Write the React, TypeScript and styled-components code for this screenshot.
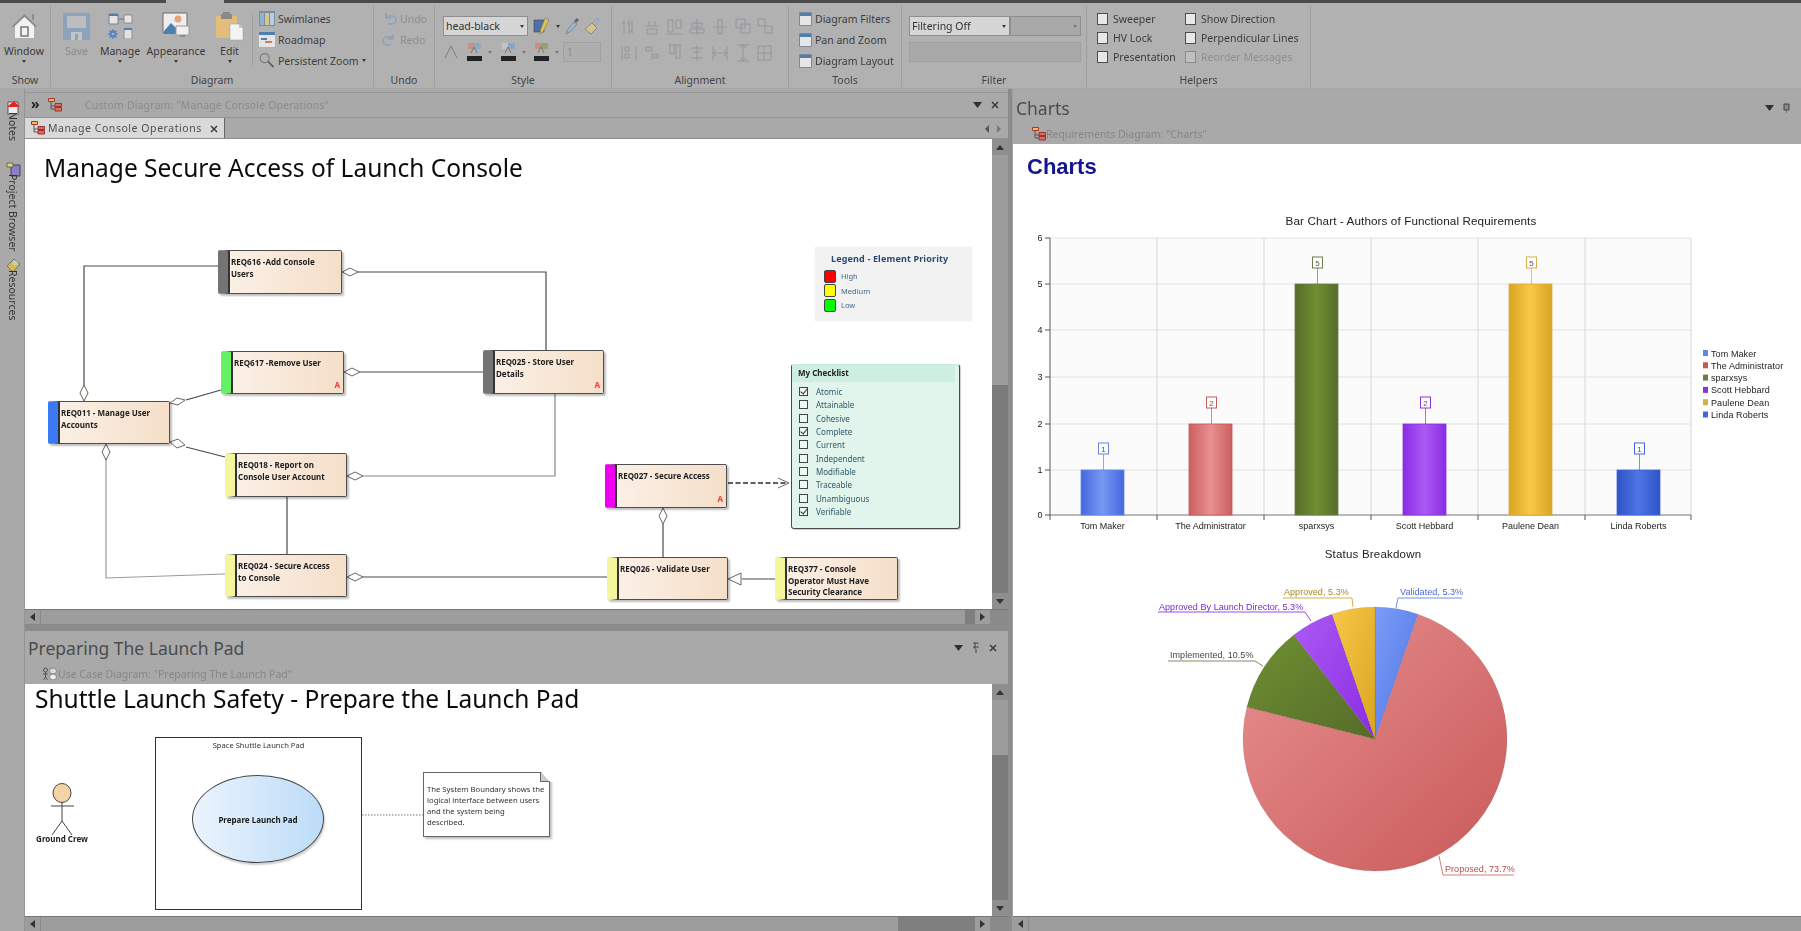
import React from "react";
import styled, { createGlobalStyle } from "styled-components";

const Global = createGlobalStyle`
  html, body { margin: 0; padding: 0; width: 1801px; height: 931px; overflow: hidden; background: #a9a9a9; }
  #root { width: 1801px; height: 931px; }
  * { box-sizing: border-box; }
`;

const UI = `"Noto Sans", "DejaVu Sans", sans-serif`;
const CHART = `"Liberation Sans", Arial, sans-serif`;

const Page = styled.div`
  width: 1801px; height: 931px; display: flex; flex-direction: column;
  font-family: ${UI}; color: #3c3c3c; filter: blur(0.6px); overflow: hidden;
`;
const TopStrip = styled.div`height: 3px; display: flex; flex: none;`;
const TopDark = styled.div<{ $w?: number }>`
  background: #4a4a4a; ${p => (p.$w ? `width:${p.$w}px;` : "flex:1;")}
`;
const TopGap = styled.div`width: 58px; background: #b1b1b1;`;

const Ribbon = styled.div`height: 86px; flex: none; display: flex; background: #b1b1b1; border-bottom: 1px solid #a6a6a6;`;
const Group = styled.div<{ $w: number }>`
  width: ${p => p.$w}px; flex: none; display: flex; flex-direction: column;
  margin: 3px 0 1px; border-right: 1px solid #9e9e9e;
`;
const GroupBody = styled.div<{ $pad?: string; $gap?: number }>`
  flex: 1; min-height: 0; display: flex; padding: ${p => p.$pad ?? "0"}; gap: ${p => p.$gap ?? 0}px;
`;
const GroupLabel = styled.div`
  height: 17px; padding-top: 3px; flex: none; text-align: center; font-size: 10.5px; line-height: 14px; color: #444;
`;
const LargeBtn = styled.div<{ $w: number; $off?: boolean }>`
  width: ${p => p.$w}px; flex: none; display: flex; flex-direction: column; align-items: center;
  padding-top: 5px; font-size: 10.5px; line-height: 14px; color: ${p => (p.$off ? "#8d8d8d" : "#3a3a3a")};
`;
const IconSlot = styled.div`height: 30px; flex: none; display: flex; align-items: center; justify-content: center;`;
const BtnLabel = styled.span`margin-top: 3px; white-space: nowrap;`;
const Caret = styled.span<{ $light?: boolean }>`
  width: 0; height: 0; flex: none; border-left: 2.5px solid transparent; border-right: 2.5px solid transparent;
  border-top: 3px solid ${p => (p.$light ? "#777" : "#3a3a3a")};
`;
const BtnCaret = styled(Caret)`margin-top: 2px;`;
const VDivider = styled.div`width: 1px; height: 53px; margin: 7px 6px 0 0; background: #a0a0a0; flex: none;`;
const SmallCol = styled.div<{ $pad?: string }>`
  display: flex; flex-direction: column; flex: none; padding: ${p => p.$pad ?? "2px 0 0"};
`;
const SmallRow = styled.div<{ $off?: boolean }>`
  height: 21px; flex: none; display: flex; align-items: center; gap: 3px; font-size: 10.5px; white-space: nowrap;
  color: ${p => (p.$off ? "#8f8f8f" : "#3d3d3d")};
`;
const Combo = styled.div<{ $w: number; $off?: boolean }>`
  width: ${p => p.$w}px; height: 20px; flex: none; display: flex; align-items: center; justify-content: space-between;
  padding: 0 3px 0 2px; font-size: 10.5px; color: #333;
  background: ${p => (p.$off ? "#a9a9a9" : "#d6d6d6")}; border: 1px solid #8e8e8e;
`;
const IconRow = styled.div<{ $gap?: number }>`
  display: flex; align-items: center; height: 26px; flex: none; gap: ${p => p.$gap ?? 0}px;
`;
const ColorCell = styled.div<{ $w: number }>`
  width: ${p => p.$w}px; flex: none; display: flex; align-items: center; gap: 5px; padding-left: 1px;
`;
const Spinner = styled.div`
  width: 38px; height: 20px; flex: none; border: 1px solid #a0a0a0; background: #aeaeae;
  font-size: 10px; color: #8c8c8c; padding-left: 3px; line-height: 18px;
`;
const AlignGrid = styled.div`
  display: grid; grid-template-columns: repeat(7, 22.7px); grid-template-rows: 26px 26px; padding: 8px 0 0 6px;
  place-items: center;
`;
const FilterStack = styled.div`display: flex; flex-direction: column; gap: 6px; padding: 10px 0 0 7px;`;
const FilterTop = styled.div`display: flex;`;
const FilterInput = styled.div`width: 172px; height: 20px; background: #a9a9a9; border: 1px solid #a0a0a0;`;
const HelperGrid = styled.div`
  display: grid; grid-template-columns: 88px 130px; grid-auto-rows: 19px; padding: 3px 0 0 10px;
`;
const Check = styled.label<{ $off?: boolean }>`
  display: flex; align-items: center; gap: 5px; font-size: 10.5px; white-space: nowrap;
  color: ${p => (p.$off ? "#8f8f8f" : "#3c3c3c")};
`;
const CheckBox = styled.span<{ $off?: boolean }>`
  width: 11px; height: 12px; flex: none; background: ${p => (p.$off ? "#c0c0c0" : "#e8e8e8")};
  border: 1px solid ${p => (p.$off ? "#8a8a8a" : "#4d4d4d")};
`;

const Body = styled.div`flex: 1; min-height: 0; display: flex;`;
const Rail = styled.div`width: 25px; flex: none; display: flex; flex-direction: column; align-items: center; padding: 11px 0 0 2px; background: #a9a9a9; border-right: 1px solid #949494;`;
const RailItem = styled.div<{ $h: number }>`
  height: ${p => p.$h}px; flex: none; display: flex; flex-direction: column; align-items: center;
`;
const RailText = styled.span`
  writing-mode: vertical-rl; font-size: 10.5px; line-height: 12px; color: #333; white-space: nowrap; margin-top: -3px;
`;
const LeftColumn = styled.div`width: 983px; flex: none; display: flex; flex-direction: column;`;
const Splitter = styled.div`width: 5px; flex: none; background: #8b8b8b; border-right: 1px solid #a0a0a0;`;
const RightColumn = styled.div`flex: 1; min-width: 0; display: flex; flex-direction: column;`;

const CaptionRow = styled.div`
  height: 26px; margin-top: 3px; flex: none; display: flex; align-items: center; background: #a9a9a9;
  border-top: 1px solid #959595; border-bottom: 1px solid #959595; padding: 0 9px 0 6px; font-size: 10.5px; color: #8b8b8b;
`;
const Chevrons = styled.span`font-size: 14px; line-height: 14px; color: #222; font-weight: 700; width: 17px; margin-top: -2px;`;
const CaptionText = styled.span`margin-left: 23px; letter-spacing: .15px;`;
const Grow = styled.div`flex: 1;`;
const PanelIcons = styled.div`display: flex; align-items: center; gap: 9px; color: #333;`;
const TabRow = styled.div`
  height: 21px; flex: none; display: flex; background: #a9a9a9; align-items: flex-end; border-bottom: 1px solid #8f8f8f; padding-right: 7px;
`;
const Tab = styled.div`
  width: 200px; height: 20px; background: #d9d9d9; display: flex; align-items: center; gap: 3px; padding: 0 6px;
  font-size: 10.5px; color: #505050; letter-spacing: .55px; border-right: 1px solid #666; white-space: nowrap;
`;
const TabClose = styled.span`margin-left: auto; font-size: 11px; color: #222; letter-spacing: 0;`;
const TabNav = styled.div`margin: 0 0 5px auto; display: flex; gap: 8px;`;
const NavArrow = styled.span<{ $dir: "l" | "r" }>`
  width: 0; height: 0; border-top: 4px solid transparent; border-bottom: 4px solid transparent;
  ${p => (p.$dir === "l" ? "border-right: 4px solid #555;" : "border-left: 4px solid #777;")}
`;
const Row = styled.div<{ $h: number }>`height: ${p => p.$h}px; flex: none; display: flex;`;
const Canvas = styled.div`flex: 1; min-width: 0; position: relative; background: #fff;`;
const DiagramSvg = styled.svg`position: absolute; inset: 0; width: 100%; height: 100%;`;
const VScroll = styled.div`width: 16px; flex: none; display: flex; flex-direction: column; background: #7b7b7b; align-items: stretch;`;
const VBtn = styled.div`height: 16px; flex: none; display: flex; align-items: center; justify-content: center; background: #8f8f8f;`;
const VThumb = styled.div<{ $h: number }>`height: ${p => p.$h}px; flex: none; background: #9c9c9c;`;
const VTrack = styled.div`flex: 1;`;
const VArrow = styled.span<{ $up?: boolean }>`
  width: 0; height: 0; border-left: 4px solid transparent; border-right: 4px solid transparent;
  ${p => (p.$up ? "border-bottom: 5px solid #333;" : "border-top: 5px solid #333;")}
`;
const HScroll = styled.div`height: 15px; flex: none; display: flex; align-items: stretch; background: #9d9d9d; border-top: 1px solid #777;`;
const HBtn = styled.div`width: 15px; flex: none; display: flex; align-items: center; justify-content: center;`;
const HThumb = styled.div`flex: 1; background: #9d9d9d; border-left: 1px solid #8a8a8a;`;
const HTrack = styled.div<{ $w: number }>`width: ${p => p.$w}px; flex: none; background: #7f7f7f;`;
const HCorner = styled.div<{ $w: number }>`width: ${p => p.$w}px; flex: none; background: #8a8a8a;`;
const HArrow = styled.span<{ $dir: "l" | "r" }>`
  width: 0; height: 0; border-top: 4px solid transparent; border-bottom: 4px solid transparent;
  ${p => (p.$dir === "l" ? "border-right: 5px solid #333;" : "border-left: 5px solid #333;")}
`;
const SplitBar = styled.div`height: 7px; flex: none; background: #8b8b8b;`;
const PanelHead = styled.div<{ $h: number; $top?: number }>`
  height: ${p => p.$h}px; flex: none; background: #a9a9a9; display: flex; flex-direction: column; padding-top: ${p => p.$top ?? 0}px;
`;
const PanelTitleRow = styled.div`height: 33px; flex: none; display: flex; align-items: center; padding: 0 11px 0 3px;`;
const PanelTitle = styled.span`font-size: 17.5px; color: #4c4c4c;`;
const PanelSub = styled.div<{ $left: number }>`
  display: flex; align-items: center; font-size: 10.5px; color: #868686; padding-left: ${p => p.$left}px; height: 16px; margin-top: 2px; flex: none;
`;
const DiagramTitle = styled.div<{ $x: number; $y: number }>`
  position: absolute; left: ${p => p.$x}px; top: ${p => p.$y}px; font-size: 24.5px; line-height: 1.2; color: #0c0c0c; white-space: nowrap;
`;
const ReqBox = styled.div<{ $x: number; $y: number; $w: number; $h: number; $bar: string }>`
  position: absolute; left: ${p => p.$x - 25}px; top: ${p => p.$y - 139}px; width: ${p => p.$w}px; height: ${p => p.$h}px;
  border: 1px solid #4e4e4e; border-radius: 2px; background: linear-gradient(90deg, #fbf0e6, #f5dfc9);
  box-shadow: 2px 2px 2px rgba(0,0,0,.25); border-left: 10px solid ${p => p.$bar};
  padding: 5px 2px 0 3px; font-size: 8px; line-height: 11.5px; font-weight: 700; color: #1c1c1c;
  &::before { content: ""; position: absolute; left: 0; top: 0; bottom: 0; width: 1.5px; background: #333; }
`;
const ReqMark = styled.span`position: absolute; right: 3px; bottom: 3px; color: #f33; font-size: 8px; line-height: 10px; font-weight: 700;`;
const Legend = styled.div`
  position: absolute; left: ${815 - 25}px; top: ${247 - 139}px; width: 157px; height: 74px; background: #f2f2f2;
  border-radius: 2px; padding: 6px 0 0 9px; box-shadow: 0 0 1px rgba(0,0,0,.2);
`;
const LegendTitle = styled.div`font-size: 9px; line-height: 12px; font-weight: 700; color: #2b4a73; padding-left: 7px; margin-bottom: 4px; letter-spacing: .15px;`;
const LegendRow = styled.div`height: 14.5px; display: flex; align-items: center; gap: 5px; font-size: 7.5px; color: #45658f;`;
const LegendSwatch = styled.span<{ $c: string }>`width: 12px; height: 13px; background: ${p => p.$c}; border: 1px solid #444; border-radius: 2px;`;
const Checklist = styled.div`
  position: absolute; left: ${791 - 25}px; top: ${364 - 139}px; width: 169px; height: 165px;
  background: #e1f5ed; border: 1px solid #4a4a4a; border-top-color: #c9ebde; border-radius: 3px; box-shadow: 1px 1px 1px rgba(0,0,0,.2);
`;
const ChecklistHead = styled.div`height: 17px; margin: 0 4px 0 0; background: #cdeee1; font-size: 8px; font-weight: 700; line-height: 15px; padding-left: 6px; color: #222;`;
const ChecklistBody = styled.div`padding: 3px 0 0 7px;`;
const ChecklistRow = styled.div`height: 13.3px; display: flex; align-items: center; gap: 8px; font-size: 8px; color: #2f5866;`;
const ChecklistBox = styled.span<{ $on?: boolean }>`
  width: 9px; height: 9px; flex: none; border: 1px solid #444; background: #eef8f4; position: relative;
  ${p => p.$on ? `&::after { content: ""; position: absolute; left: 2px; top: -1px; width: 3px; height: 6px; border: solid #333; border-width: 0 1.5px 1.5px 0; transform: rotate(40deg); }` : ""}
`;
const Note = styled.div`
  position: absolute; left: ${423 - 25}px; top: ${772 - 684}px; width: 127px; height: 65px; background: #fff;
  border: 1px solid #666; box-shadow: 2px 2px 2px rgba(0,0,0,.25); padding: 11px 2px 0 3px; font-size: 7.7px; line-height: 11px; color: #343434;
  white-space: nowrap; clip-path: polygon(0 0, 118px 0, 127px 10px, 135px 10px, 135px 75px, 0 75px);
`;
const NoteLine = styled.div``;
const NoteFold = styled.span`position: absolute; right: -1px; top: -1px; width: 10px; height: 10px; background: linear-gradient(45deg, #ccc 50%, #fff 50%); border-left: 1px solid #666; border-bottom: 1px solid #666;`;
const Boundary = styled.div`
  position: absolute; left: ${155 - 25}px; top: ${737 - 684}px; width: 207px; height: 173px; border: 1px solid #333;
  font-size: 7.6px; text-align: center; padding-top: 2px; line-height: 11px; color: #333;
`;
const UseCase = styled.div`
  position: absolute; left: ${192 - 25}px; top: ${775 - 684}px; width: 132px; height: 88px; border-radius: 50%;
  border: 1px solid #444; background: linear-gradient(90deg, #ebf4fd, #bddcf8); box-shadow: 1px 2px 2px rgba(0,0,0,.2);
  display: flex; align-items: center; justify-content: center; font-size: 8px; font-weight: 700; color: #1a1a1a;
`;
const ActorLabel = styled.div`position: absolute; left: ${36 - 25}px; top: ${833 - 684}px; width: 52px; text-align: center; font-size: 8px; font-weight: 700; color: #222; white-space: nowrap; line-height: 11px;`;
const ChartHeading = styled.div`
  position: absolute; left: 14px; top: 9px; font-family: ${CHART}; font-size: 22px; line-height: 28px; font-weight: 700; color: #15158f;
`;

const Home = () => (
  <svg width="29" height="28" viewBox="0 0 29 28">
    <path d="M24 2h-2v5l2 2z" fill="#8c8c8c" />
    <path d="M14.5 2 2 14l1.5 1.5L14.5 5l11 10.500L27 14z" fill="#8e8e8e" />
    <path d="M5 14 14.500 5 24 14v12H5z" fill="#f2f2f2" />
    <path d="M11 15h7v9h-7z" fill="none" stroke="#777" strokeWidth="1.500" />
  </svg>
);
const Floppy = () => (
  <svg width="27" height="27" viewBox="0 0 27 27">
    <path d="M0 0h27v27H0z" fill="#8ba3bb" />
    <path d="M4 3h19v12H4z" fill="#bdbdbd" />
    <path d="M8 19h11v8H8z" fill="#c4c4c4" /><path d="M12 21h3v6h-3z" fill="#8ba3bb" />
  </svg>
);
const ManageIcon = () => (
  <svg width="26" height="26" viewBox="0 0 26 26">
    <path d="M2 1h9v10H2z" fill="#e6e6e6" stroke="#6d8299" /><path d="M2 1h9v2H2z" fill="#587ea6" />
    <path d="M17 2h8v8h-8z" fill="#e6e6e6" stroke="#8d8d8d" /><path d="M11 6h6" stroke="#777" />
    <path d="M17 16h8v10h-8z" fill="#e2e2e2" stroke="#8d8d8d" /><path d="M17 15h8v2h-8z" fill="#587ea6" />
    <circle cx="6" cy="21" r="3.500" fill="#4f86c4" /><circle cx="6" cy="21" r="1.300" fill="#b1b1b1" />
    <path d="M6 16v2M6 24v2M1 21h2M9 21h2M2.500 17.500l1.500 1.500M8 23l1.500 1.500M2.500 24.500 4 23M8 19l1.500-1.500" stroke="#4f86c4" strokeWidth="1.200" />
  </svg>
);
const AppearanceIcon = () => (
  <svg width="28" height="28" viewBox="0 0 28 28">
    <path d="M1 1h24v20H1z" fill="#eee" stroke="#6c6c6c" />
    <path d="M2 19 9 11l7 7v4H2z" fill="#4f7faf" />
    <circle cx="16" cy="7" r="3.500" fill="#e8a27a" />
    <path d="M14 14h13v9H14z" fill="#f0f0f0" stroke="#999" />
    <path d="M18 23h5v2h-5z" fill="#8c8c8c" />
  </svg>
);
const ClipIcon = () => (
  <svg width="28" height="30" viewBox="0 0 28 30">
    <path d="M0 5h21v22H0z" fill="#e3bd7c" />
    <path d="M7 3h7V1h-7zM5 3h11v5H5z" fill="#8a8a8a" />
    <path d="M14 13h9l4 4v12H14z" fill="#f4f4f4" stroke="#9a9a9a" strokeWidth=".5" />
    <path d="M23 13v4h4z" fill="#c5c5c5" />
  </svg>
);
const Swim = () => (
  <svg width="16" height="15" viewBox="0 0 16 15">
    <path d="M0 0h16v15H0z" fill="#7a8ea2" /><path d="M1 2h4v12H1z" fill="#93b2cf" /><path d="M6 2h4v12H6z" fill="#d8c58f" /><path d="M11 2h4v12h-4z" fill="#b5cfe4" />
  </svg>
);
const Road = () => (
  <svg width="16" height="15" viewBox="0 0 16 15">
    <path d="M0 0h16v15H0z" fill="#e4e4e4" /><path d="M0 0h16v3H0z" fill="#4f7faf" />
    <path d="M2 6h6v2H2z" fill="#4f7faf" /><path d="M6 9h7v2H6z" fill="#cf7b64" />
  </svg>
);
const Zoom = () => (
  <svg width="16" height="17" viewBox="0 0 17 17" fill="none">
    <circle cx="6" cy="6" r="4.800" stroke="#7b7b7b" strokeWidth="1.200" /><path d="m9.500 9.500 6 6" stroke="#636363" strokeWidth="2" />
  </svg>
);
const PanelGlyph = () => (
  <svg width="13" height="14" viewBox="0 0 13 14">
    <path d="M.5.500h12v13H.5z" fill="#e6e6e6" stroke="#7c8a98" /><path d="M1 1h11v3H1z" fill="#4f7faf" />
  </svg>
);
const DiagramGlyph = () => (
  <svg width="14" height="14" viewBox="0 0 14 14">
    <path d="M3 4v7h4M3 8h4" stroke="#555" fill="none" />
    <path d="M.5.500h6v3h-6z" fill="#e6c64f" stroke="#a33" />
    <path d="M7 5.500h6.500v3H7zM7 9.500h6.500v3.500H7z" fill="#e06a5c" stroke="#933" />
  </svg>
);
const Triangle = () => <svg width="9" height="6" viewBox="0 0 9 6"><path d="M0 0h9L4.500 6z" fill="#2f2f2f" /></svg>;
const CloseX = () => <svg width="8" height="8" viewBox="0 0 8 8"><path d="m1 1 6 6M7 1 1 7" stroke="#333" strokeWidth="1.400" /></svg>;
const PinV = () => <svg width="8" height="11" viewBox="0 0 8 11"><path d="M1 1h5v1M3 1v6M1 5h6M4 7v4" stroke="#444" fill="none" /></svg>;
const PinH = () => <svg width="7" height="10" viewBox="0 0 7 10"><path d="M1 1h5v6H1z" fill="#8a8a8a" stroke="#444" /><path d="M3.500 7v3" stroke="#777" /></svg>;
const Mono = ({ d }: { d: string }) => (
  <svg width="16" height="18" viewBox="0 0 16 18" fill="none"><path d={d} stroke="#8f949a" strokeWidth=".9" /></svg>
);
const Brush = () => (
  <svg width="18" height="18" viewBox="0 0 18 18">
    <path d="M1 3h10v12H1z" fill="#4f6fa6" stroke="#444" strokeWidth=".6" /><path d="M12 1l4 2-6 12-3 2 .5-4z" fill="#e3c14c" stroke="#777" strokeWidth=".6" />
  </svg>
);
const Dropper = () => (
  <svg width="14" height="18" viewBox="0 0 14 18"><path d="m1 17 2-5 6-7 3 2-6 7z" fill="#9db6cf" stroke="#6c8094" strokeWidth=".8" /><path d="m9 4 3-3 2 2-3 3z" fill="#666" /></svg>
);
const Bucket = () => (
  <svg width="16" height="18" viewBox="0 0 16 18"><path d="m1 12 7-6 5 5-6 6z" fill="#d6c489" stroke="#8a8a8a" /><path d="m8 6 5-5 2 2-4 5z" fill="#9db6cf" stroke="#8a8a8a" strokeWidth=".5" /></svg>
);
const ColorA = ({ a, b }: { a: string; b: string }) => (
  <svg width="17" height="19" viewBox="0 0 17 19">
    <path d="M2 0h6v6H2z" fill={a} opacity=".8" /><path d="M8 0h7v6H8z" fill={b} opacity=".8" />
    <path d="M5 10 8 4l3 6" stroke="#777" fill="none" /><path d="M1 13h15v5H1z" fill="#222" />
  </svg>
);

const rows: string[] = [
  "M3 2v14M8 2v14M11 2v14M1 5h3M6 5h3M9 13h3",
  "M1 8h14M5 3v5M11 3v5M3 11h10v5H3z",
  "M1 2h5v12H1zM9 2h5v8H9zM0 16h16",
  "M8 1v16M3 5h10v4H3zM1 11h14v4H1z",
  "M1 9h14M6 2h4v14H6z",
  "M1 1h9v9H1zM6 6h9v9H6z",
  "M1 1h7v7H1zM8 8h7v7H8z",
];
const rows2: string[] = [
  "M1 2v14M15 2v14M4 3h4v4H4zM4 10h4v4H4z",
  "M8 2v14M2 3h4v4H2zM10 10h4v4h-4z",
  "M1 1h14M3 1v9h4V1M9 1v13h4V1",
  "M8 1v16M2 4h12M2 14h12M4 8h8",
  "M1 2v14M15 2v14M1 9h14M4 6l-3 3 3 3M12 6l3 3-3 3",
  "M2 1h12M2 17h12M8 1v16M5 4l3-3 3 3M5 14l3 3 3-3",
  "M1 2h13v14H1zM7 2v14M1 9h13",
];

const reqs = [
  { x: 218, y: 250, w: 124, h: 44, bar: "#747474", t: ["REQ616 -Add Console", "Users"] },
  { x: 221, y: 351, w: 123, h: 43, bar: "#66f066", t: ["REQ617 -Remove User"], m: true },
  { x: 483, y: 350, w: 121, h: 44, bar: "#747474", t: ["REQ025 - Store User", "Details"], m: true },
  { x: 48, y: 401, w: 122, h: 43, bar: "#3c7af5", t: ["REQ011 - Manage User", "Accounts"] },
  { x: 225, y: 453, w: 122, h: 44, bar: "#f5f59c", t: ["REQ018 - Report on", "Console User Account"] },
  { x: 225, y: 554, w: 122, h: 43, bar: "#f5f59c", t: ["REQ024 - Secure Access", "to Console"] },
  { x: 605, y: 464, w: 122, h: 44, bar: "#f000f0", t: ["REQ027 - Secure Access"], m: true },
  { x: 607, y: 557, w: 121, h: 43, bar: "#f5f59c", t: ["REQ026 - Validate User"] },
  { x: 775, y: 557, w: 123, h: 43, bar: "#f5f59c", t: ["REQ377 - Console", "Operator Must Have", "Security Clearance"] },
];
const checklist: [string, boolean][] = [
  ["Atomic", true], ["Attainable", false], ["Cohesive", false], ["Complete", true], ["Current", false],
  ["Independent", false], ["Modifiable", false], ["Traceable", false], ["Unambiguous", false], ["Verifiable", true],
];

const diamondH = (x: number, y: number) => `M${x} ${y}l8 -4 8 4 -8 4z`;
const diamondV = (x: number, y: number) => `M${x} ${y}l-4 8 4 8 4 -8z`;

const Connectors = () => (
  <DiagramSvg viewBox="25 139 967 470">
    <g fill="none" stroke="#4a4a4a" strokeWidth="1.200">
      <path d="M218 266H84V385" />
      <path d="M357 272H546V350" />
      <path d="M360 372H483" />
      <path d="M221 390 186 400" />
      <path d="M225 457 186 447" />
      <path d="M106 459V578L225 574" stroke="#9a9a9a" />
      <path d="M363 476H555V394" stroke="#888" />
      <path d="M287 497V554" />
      <path d="M363 577H607" />
      <path d="M663 524V557" />
      <path d="M742 579H775" />
      <path d="M728 483H788" stroke="#2a2a2a" strokeWidth="1.400" strokeDasharray="5 2.500" />
      <path d="M778 478 789 483 778 488" strokeWidth=".8" />
    </g>
    <g fill="#fffdf5" stroke="#555" strokeWidth=".9">
      <path d={diamondH(342, 272)} /><path d={diamondH(344, 372)} /><path d={diamondH(347, 476)} /><path d={diamondH(347, 577)} />
      <path d="m170 403 7-5 8 2-7 5z" /><path d="m170 442 8-3 7 6-8 3z" />
      <path d={diamondV(84, 385)} /><path d={diamondV(106, 444)} /><path d={diamondV(663, 508)} />
      <path d="M728 579 741 573V585z" />
    </g>
  </DiagramSvg>
);

const Actor = () => (
  <DiagramSvg viewBox="25 684 967 232">
    <ellipse cx="62" cy="793" rx="9" ry="9.500" fill="#f4d3a5" stroke="#444" />
    <path d="M62 802V821M51 806H74M62 821 52 835M62 821 72 835" stroke="#444" fill="none" />
    <path d="M362 815H423" stroke="#777" strokeDasharray="1.500 1.500" />
  </DiagramSvg>
);

type Bar = { n: string; x: number; v: number; dark: string; light: string; box: string };
const bars: Bar[] = [
  { n: "Tom Maker", x: 1081, v: 1, dark: "#4468dc", light: "#7898f5", box: "#5f86ee" },
  { n: "The Administrator", x: 1189, v: 2, dark: "#cc5f5f", light: "#e89090", box: "#c85858" },
  { n: "sparxsys", x: 1295, v: 5, dark: "#566b2b", light: "#6f9030", box: "#6b7f45" },
  { n: "Scott Hebbard", x: 1403, v: 2, dark: "#8a2be2", light: "#ab5af5", box: "#8a34d8" },
  { n: "Paulene Dean", x: 1509, v: 5, dark: "#daa520", light: "#f8c848", box: "#d7ae4c" },
  { n: "Linda Roberts", x: 1617, v: 1, dark: "#2f54c6", light: "#4d75e6", box: "#4068dc" },
];
const gridY = [515, 470, 424, 377, 330, 284, 238];
const gridX = [1050, 1157, 1264, 1371, 1478, 1585, 1691];

const polar = (deg: number, r: number) => {
  const a = ((deg - 90) * Math.PI) / 180;
  return [1375 + r * Math.cos(a), 739 + r * Math.sin(a)];
};
const slicePath = (a: number, b: number) => {
  const [x1, y1] = polar(a, 132);
  const [x2, y2] = polar(b, 132);
  return `M1375 739L${x1} ${y1}A132 132 0 ${b - a > 180 ? 1 : 0} 1 ${x2} ${y2}Z`;
};

const Charts = () => (
  <DiagramSvg viewBox="1013 144 788 772">
    <defs>
      {bars.map((b, i) => (
        <linearGradient id={`bar${i}`} key={b.n}>
          <stop offset="0" stopColor={b.dark} /><stop offset=".5" stopColor={b.light} /><stop offset="1" stopColor={b.dark} />
        </linearGradient>
      ))}
      <linearGradient id="pR" x1="0" y1="0" x2="1" y2="1"><stop offset="0" stopColor="#e89090" /><stop offset="1" stopColor="#c95a5a" /></linearGradient>
      <linearGradient id="pG" x1="0" y1="0" x2="1" y2="1"><stop offset="0" stopColor="#6f9030" /><stop offset="1" stopColor="#566b2b" /></linearGradient>
      <linearGradient id="pP" x1="0" y1="0" x2="1" y2="1"><stop offset="0" stopColor="#ab5af5" /><stop offset="1" stopColor="#8a2be2" /></linearGradient>
      <linearGradient id="pY" x1="0" y1="0" x2="1" y2="1"><stop offset="0" stopColor="#f8c848" /><stop offset="1" stopColor="#daa520" /></linearGradient>
      <linearGradient id="pB" x1="0" y1="0" x2="1" y2="1"><stop offset="0" stopColor="#7c9cf5" /><stop offset="1" stopColor="#4e74e8" /></linearGradient>
    </defs>
    <g fontFamily={CHART} fill="#222">
      <text x="1411" y="225" fontSize="11.700" textAnchor="middle" letterSpacing=".1">Bar Chart - Authors of Functional Requirements</text>
      <rect x="1050" y="238" width="641" height="277" fill="#fbfbfb" />
      {gridY.slice(1).map(y => <path key={y} d={`M1050 ${y}H1691`} stroke="#e2e2e2" strokeWidth="1" />)}
      {gridX.slice(1).map(x => <path key={x} d={`M${x} 238V515`} stroke="#dedede" strokeWidth="1.200" />)}
      <path d="M1050 238V515H1691" fill="none" stroke="#777" strokeWidth="1.200" />
      {gridY.map((y, i) => (
        <g key={y}>
          <path d={`M1045 ${y}H1050`} stroke="#555" />
          <text x="1040" y={y + 3} fontSize="9" textAnchor="middle">{i}</text>
        </g>
      ))}
      {gridX.map(x => <path key={x} d={`M${x} 515V520`} stroke="#555" />)}
      {bars.map((b, i) => {
        const top = gridY[b.v];
        const cx = b.x + 21.5;
        return (
          <g key={b.n}>
            <rect x={b.x} y={top} width="43" height={515 - top} fill={`url(#bar${i})`} stroke={b.box} strokeWidth=".8" />
            <path d={`M${cx + 1} ${top}V${top - 16}`} stroke={b.box} opacity=".7" />
            <rect x={cx - 4} y={top - 27} width="10" height="11" fill="#fff" stroke={b.box} strokeWidth="1" />
            <text x={cx + 1} y={top - 18} fontSize="8" textAnchor="middle" fill="#555">{b.v}</text>
            <text x={cx} y="529" fontSize="9" textAnchor="middle">{b.n}</text>
            <rect x="1703" y={350 + i * 12.300} width="5" height="6" fill={b.box} />
            <text x="1711" y={356.500 + i * 12.300} fontSize="9" letterSpacing=".1">{b.n}</text>
          </g>
        );
      })}
      <text x="1373" y="558" fontSize="11.500" textAnchor="middle" letterSpacing=".2">Status Breakdown</text>
      <g stroke="#00000022" strokeWidth=".6">
        <path d={slicePath(0, 19)} fill="url(#pB)" />
        <path d={slicePath(19, 284)} fill="url(#pR)" />
        <path d={slicePath(284, 322)} fill="url(#pG)" />
        <path d={slicePath(322, 341)} fill="url(#pP)" />
        <path d={slicePath(341, 360)} fill="url(#pY)" />
      </g>
      <g fontSize="9" letterSpacing=".05">
        <path d="M1462 598H1398L1396 608" fill="none" stroke="#6e8ff0" />
        <text x="1400" y="595" fill="#4868d8">Validated, 5.3%</text>
        <path d="M1283 598H1352L1353 607" fill="none" stroke="#d7ae4c" />
        <text x="1284" y="595" fill="#a98824">Approved, 5.3%</text>
        <path d="M1158 612H1305L1311 621" fill="none" stroke="#9a4fe8" />
        <text x="1159" y="610" fill="#7a2cc8">Approved By Launch Director, 5.3%</text>
        <path d="M1168 661H1255L1263 666" fill="none" stroke="#7f8f60" />
        <text x="1170" y="658" fill="#445">Implemented, 10.5%</text>
        <path d="M1439 856 1443 875H1514" fill="none" stroke="#d77a7a" />
        <text x="1445" y="872" fill="#b84c4c">Proposed, 73.7%</text>
      </g>
    </g>
  </DiagramSvg>
);

export default function App() {
  return (
    <Page>
      <Global />
      <TopStrip><TopDark $w={166} /><TopGap /><TopDark /></TopStrip>
      <Ribbon>
        <Group $w={51}>
          <GroupBody $pad="0 0 0 4px"><LargeBtn $w={40}><IconSlot><Home /></IconSlot><BtnLabel>Window</BtnLabel><BtnCaret /></LargeBtn></GroupBody>
          <GroupLabel>Show</GroupLabel>
        </Group>
        <Group $w={323}>
          <GroupBody $pad="0 0 0 7px">
            <LargeBtn $w={37} $off><IconSlot><Floppy /></IconSlot><BtnLabel>Save</BtnLabel></LargeBtn>
            <LargeBtn $w={50}><IconSlot><ManageIcon /></IconSlot><BtnLabel>Manage</BtnLabel><BtnCaret /></LargeBtn>
            <LargeBtn $w={62}><IconSlot><AppearanceIcon /></IconSlot><BtnLabel>Appearance</BtnLabel><BtnCaret /></LargeBtn>
            <LargeBtn $w={45}><IconSlot><ClipIcon /></IconSlot><BtnLabel>Edit</BtnLabel><BtnCaret /></LargeBtn>
            <VDivider />
            <SmallCol>
              <SmallRow><Swim />Swimlanes</SmallRow>
              <SmallRow><Road />Roadmap</SmallRow>
              <SmallRow><Zoom />Persistent Zoom <Caret /></SmallRow>
            </SmallCol>
          </GroupBody>
          <GroupLabel>Diagram</GroupLabel>
        </Group>
        <Group $w={61}>
          <GroupBody $pad="0 0 0 8px">
            <SmallCol>
              <SmallRow $off><svg width="15" height="14" viewBox="0 0 15 14" fill="none"><path d="M4 4h6a3 3 0 0 1 0 8H6M4 1v5h5" stroke="#8ba2b8" strokeWidth="1.500" /></svg>Undo</SmallRow>
              <SmallRow $off><svg width="15" height="14" viewBox="0 0 15 14" fill="none"><path d="M11 4H5a3 3 0 0 0 0 8h4M11 1v5H6" stroke="#8ba2b8" strokeWidth="1.500" /></svg>Redo</SmallRow>
            </SmallCol>
          </GroupBody>
          <GroupLabel>Undo</GroupLabel>
        </Group>
        <Group $w={177}>
          <GroupBody $pad="7px 0 0 8px">
            <SmallCol $pad="0">
              <IconRow $gap={5}>
                <Combo $w={85}>head-black<Caret /></Combo>
                <Brush /><Caret /><Dropper /><Bucket />
              </IconRow>
              <IconRow>
                <ColorCell $w={22}><svg width="14" height="14" viewBox="0 0 14 14"><path d="M1 13 7 1l6 12" stroke="#7c7c7c" fill="none" /></svg></ColorCell>
                <ColorCell $w={34}><ColorA a="#cc8877" b="#88a8c8" /><Caret $light /></ColorCell>
                <ColorCell $w={33}><ColorA a="#c8c8c8" b="#7fa5c8" /><Caret $light /></ColorCell>
                <ColorCell $w={31}><ColorA a="#c88870" b="#88a068" /><Caret $light /></ColorCell>
                <Spinner>1</Spinner>
              </IconRow>
            </SmallCol>
          </GroupBody>
          <GroupLabel>Style</GroupLabel>
        </Group>
        <Group $w={177}>
          <GroupBody>
            <AlignGrid>
              {rows.map((d, i) => <Mono key={i} d={d} />)}
              {rows2.map((d, i) => <Mono key={i} d={d} />)}
            </AlignGrid>
          </GroupBody>
          <GroupLabel>Alignment</GroupLabel>
        </Group>
        <Group $w={113}>
          <GroupBody $pad="0 0 0 10px">
            <SmallCol>
              <SmallRow><PanelGlyph />Diagram Filters</SmallRow>
              <SmallRow><PanelGlyph />Pan and Zoom</SmallRow>
              <SmallRow><PanelGlyph />Diagram Layout</SmallRow>
            </SmallCol>
          </GroupBody>
          <GroupLabel>Tools</GroupLabel>
        </Group>
        <Group $w={185}>
          <GroupBody>
            <FilterStack>
              <FilterTop>
                <Combo $w={101}>Filtering Off<Caret /></Combo>
                <Combo $w={71} $off><span /><Caret $light /></Combo>
              </FilterTop>
              <FilterInput />
            </FilterStack>
          </GroupBody>
          <GroupLabel>Filter</GroupLabel>
        </Group>
        <Group $w={224}>
          <GroupBody>
            <HelperGrid>
              <Check><CheckBox />Sweeper</Check>
              <Check><CheckBox />Show Direction</Check>
              <Check><CheckBox />HV Lock</Check>
              <Check><CheckBox />Perpendicular Lines</Check>
              <Check><CheckBox />Presentation</Check>
              <Check $off><CheckBox $off />Reorder Messages</Check>
            </HelperGrid>
          </GroupBody>
          <GroupLabel>Helpers</GroupLabel>
        </Group>
      </Ribbon>
      <Body>
        <Rail>
          <RailItem $h={62}>
            <svg width="15" height="15" viewBox="0 0 15 15"><path d="M2 2h10v13H2z" fill="#eee" stroke="#555" /><path d="M1 7 8 1l6 6z" fill="#e22" /></svg>
            <RailText>Notes</RailText>
          </RailItem>
          <RailItem $h={96}>
            <svg width="15" height="15" viewBox="0 0 15 15"><path d="M5 3h9v11H5z" fill="#8b7fc8" stroke="#445" /><path d="M1 1h6v4H1z" fill="#e8d36a" stroke="#666" /></svg>
            <RailText>Project Browser</RailText>
          </RailItem>
          <RailItem $h={70}>
            <svg width="15" height="15" viewBox="0 0 15 15"><path d="m1 8 7-7 6 5-7 8z" fill="#d9b94a" stroke="#776" /><circle cx="9" cy="5" r="2.500" fill="#bcd" /></svg>
            <RailText>Resources</RailText>
          </RailItem>
        </Rail>
        <LeftColumn>
          <CaptionRow>
            <Chevrons>»</Chevrons><DiagramGlyph />
            <CaptionText>Custom Diagram: "Manage Console Operations"</CaptionText>
            <Grow />
            <PanelIcons><Triangle /><CloseX /></PanelIcons>
          </CaptionRow>
          <TabRow>
            <Tab><DiagramGlyph />Manage Console Operations<TabClose><CloseX /></TabClose></Tab>
            <TabNav><NavArrow $dir="l" /><NavArrow $dir="r" /></TabNav>
          </TabRow>
          <Row $h={470}>
            <Canvas>
              <Connectors />
              <DiagramTitle $x={19} $y={14}>Manage Secure Access of Launch Console</DiagramTitle>
              {reqs.map(r => (
                <ReqBox key={r.t[0]} $x={r.x} $y={r.y} $w={r.w} $h={r.h} $bar={r.bar}>
                  {r.t.map(l => <div key={l}>{l}</div>)}
                  {r.m ? <ReqMark>A</ReqMark> : null}
                </ReqBox>
              ))}
              <Legend>
                <LegendTitle>Legend - Element Priority</LegendTitle>
                <LegendRow><LegendSwatch $c="#ff0000" />High</LegendRow>
                <LegendRow><LegendSwatch $c="#ffff00" />Medium</LegendRow>
                <LegendRow><LegendSwatch $c="#00ff00" />Low</LegendRow>
              </Legend>
              <Checklist>
                <ChecklistHead>My Checklist</ChecklistHead>
                <ChecklistBody>
                  {checklist.map(([t, on]) => <ChecklistRow key={t}><ChecklistBox $on={on} />{t}</ChecklistRow>)}
                </ChecklistBody>
              </Checklist>
            </Canvas>
            <VScroll>
              <VBtn><VArrow $up /></VBtn>
              <VThumb $h={230} />
              <VTrack />
              <VBtn><VArrow /></VBtn>
            </VScroll>
          </Row>
          <HScroll>
            <HBtn><HArrow $dir="l" /></HBtn><HThumb /><HTrack $w={10} /><HBtn><HArrow $dir="r" /></HBtn><HCorner $w={18} />
          </HScroll>
          <SplitBar />
          <PanelHead $h={53}>
            <PanelTitleRow>
              <PanelTitle>Preparing The Launch Pad</PanelTitle>
              <Grow />
              <PanelIcons><Triangle /><PinV /><CloseX /></PanelIcons>
            </PanelTitleRow>
            <PanelSub $left={17}>
              <svg width="16" height="14" viewBox="0 0 16 14" fill="none"><circle cx="3.500" cy="3" r="2" stroke="#555" /><path d="M3.500 5v5M1 7h5M3.500 10l-2 3M3.500 10l2 3" stroke="#555" /><ellipse cx="11" cy="4" rx="3.500" ry="3" fill="#ddd" stroke="#888" /><ellipse cx="11" cy="10" rx="3.500" ry="3" fill="#eee" stroke="#888" /></svg>
              Use Case Diagram: "Preparing The Launch Pad"
            </PanelSub>
          </PanelHead>
          <Row $h={232}>
            <Canvas>
              <Actor />
              <DiagramTitle $x={10} $y={0}>Shuttle Launch Safety - Prepare the Launch Pad</DiagramTitle>
              <Boundary>Space Shuttle Launch Pad</Boundary>
              <UseCase>Prepare Launch Pad</UseCase>
              <ActorLabel>Ground Crew</ActorLabel>
              <Note>
                <NoteFold />
                <NoteLine>The System Boundary shows the</NoteLine>
                <NoteLine>logical interface between users</NoteLine>
                <NoteLine>and the system being</NoteLine>
                <NoteLine>described.</NoteLine>
              </Note>
            </Canvas>
            <VScroll>
              <VBtn><VArrow $up /></VBtn>
              <VThumb $h={55} />
              <VTrack />
              <VBtn><VArrow /></VBtn>
            </VScroll>
          </Row>
          <HScroll>
            <HBtn><HArrow $dir="l" /></HBtn><HThumb /><HTrack $w={77} /><HBtn><HArrow $dir="r" /></HBtn><HCorner $w={18} />
          </HScroll>
        </LeftColumn>
        <Splitter />
        <RightColumn>
          <PanelHead $h={55} $top={2}>
            <PanelTitleRow>
              <PanelTitle>Charts</PanelTitle>
              <Grow />
              <PanelIcons><Triangle /><PinH /></PanelIcons>
            </PanelTitleRow>
            <PanelSub $left={19}><DiagramGlyph />Requirements Diagram: "Charts"</PanelSub>
          </PanelHead>
          <Row $h={772}>
            <Canvas>
              <Charts />
              <ChartHeading>Charts</ChartHeading>
            </Canvas>
          </Row>
          <HScroll><HBtn><HArrow $dir="l" /></HBtn><HThumb /></HScroll>
        </RightColumn>
      </Body>
    </Page>
  );
}
